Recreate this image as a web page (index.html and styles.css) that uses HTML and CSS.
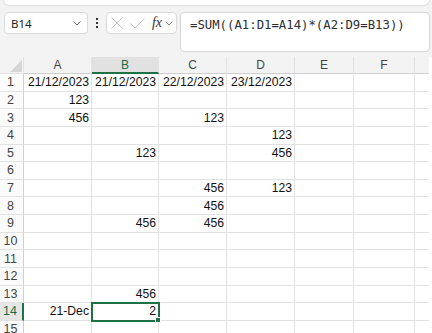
FILE: index.html
```html
<!DOCTYPE html>
<html lang="en">
<head>
  <meta charset="UTF-8" />
  <title>Sheet</title>
  <link rel="stylesheet" href="styles.css">
</head>
<body>

  <div class="top">
    <div class="ribbon-edge"></div>
    <div class="formula-bar">
      <div class="name-box">
        <span>B14</span>
        <svg width="8" height="5" viewBox="0 0 8 5"><path d="M0.5 0.5 L4 4 L7.5 0.5" fill="none" stroke="#666" stroke-width="1"/></svg>
      </div>
      <div class="dots"><i></i><i></i><i></i></div>
      <div class="fx-box">
        <svg class="icon-x" width="12" height="12" viewBox="0 0 12 12"><path d="M0.5 0.5 L11.5 11.5 M11.5 0.5 L0.5 11.5" fill="none" stroke="#c4c4c4" stroke-width="1"/></svg>
        <svg class="icon-ok" width="15" height="11" viewBox="0 0 15 11"><path d="M0.5 5.5 L5 10 L14.5 0.5" fill="none" stroke="#c4c4c4" stroke-width="1"/></svg>
        <span class="fx">fx</span>
        <svg width="8" height="5" viewBox="0 0 8 5"><path d="M0.5 0.5 L4 4 L7.5 0.5" fill="none" stroke="#888" stroke-width="1"/></svg>
      </div>
      <div class="formula-input">=SUM((A1:D1=A14)*(A2:D9=B13))</div>
    </div>
  </div>

  <div class="sheet-wrap">
    <div class="sheet" id="sheet">
      <!-- cells are inserted by JS -->
    </div>
  </div>

  <script>
    // last column is only partly in view, its letter falls outside
    const cols = ["A", "B", "C", "D", "E", "F", ""];
    const data = {
      1: { A: "21/12/2023", B: "21/12/2023", C: "22/12/2023", D: "23/12/2023" },
      2: { A: "123" },
      3: { A: "456", C: "123" },
      4: { D: "123" },
      5: { B: "123", D: "456" },
      7: { C: "456", D: "123" },
      8: { C: "456" },
      9: { B: "456", C: "456" },
      13: { B: "456" },
      14: { A: "21-Dec", B: "2" }
    };
    const activeCol = "B";
    const activeRow = 14;

    const sheet = document.getElementById("sheet");

    function addCell(cls, text) {
      const cell = document.createElement("div");
      cell.className = cls;
      cell.textContent = text || "";
      sheet.appendChild(cell);
      return cell;
    }

    // Header row
    const corner = addCell("corner");
    corner.innerHTML = '<svg width="14" height="14" viewBox="0 0 14 14"><path d="M13 1 L13 13 L1 13 Z" fill="#d6d6d6"/></svg>';
    cols.forEach(c => {
      addCell("col-head" + (c === activeCol ? " active" : ""), c);
    });

    // Rows
    for (let r = 1; r <= 15; r++) {
      addCell("row-head" + (r === activeRow ? " active" : ""), r);
      cols.forEach(c => {
        const value = data[r] && data[r][c];
        const cls = "cell" + (r === activeRow && c === activeCol ? " selected" : "");
        addCell(cls, value);
      });
    }
  </script>

</body>
</html>
```
FILE: styles.css
```css
body {
  margin: 0;
  width: 432px;
  height: 333px;
  overflow: hidden;
  background-color: #fff;
  font-family: "Liberation Sans", Arial, sans-serif;
}

.top {
  background-color: #f3f3f3;
  padding-bottom: 5px;
}

.ribbon-edge {
  height: 5px;
  margin: 0 2px 0 3px;
  background-color: #fff;
  border: 1px solid #e0e0e0;
  border-top: none;
  border-radius: 0 0 6px 6px;
}

.formula-bar {
  display: flex;
  align-items: flex-start;
  padding: 6px 2px 0 4px;
}

.name-box {
  box-sizing: border-box;
  width: 84px;
  height: 22px;
  display: flex;
  align-items: center;
  justify-content: space-between;
  padding: 0 6px 0 6px;
  background-color: #fff;
  border: 1px solid #dadada;
  border-radius: 4px;
  font-family: "Noto Sans", sans-serif;
  font-size: 11.5px;
  color: #222;
}

.dots {
  width: 18px;
  height: 22px;
  display: flex;
  flex-direction: column;
  align-items: center;
  justify-content: center;
  gap: 2px;
}

.dots i {
  width: 2px;
  height: 2px;
  background-color: #333;
}

.fx-box {
  box-sizing: border-box;
  width: 71px;
  height: 22px;
  margin-right: 3px;
  display: flex;
  align-items: center;
  padding: 0 3px 0 4px;
  background-color: #fff;
  border: 1px solid #dadada;
  border-radius: 4px;
}

.icon-x {
  margin-right: 7px;
}

.icon-ok {
  margin-right: 7px;
}

.fx {
  font-family: "Liberation Serif", serif;
  font-style: italic;
  font-size: 14px;
  color: #333;
  margin-right: 3px;
}

.formula-input {
  flex: 1;
  box-sizing: border-box;
  height: 40px;
  padding: 4px 9px;
  background-color: #fff;
  border: 1px solid #d6d6d6;
  border-radius: 4px;
  font-family: "DejaVu Sans Mono", monospace;
  font-size: 12.3px;
  line-height: 16px;
  color: #2c2f36;
}

.sheet-wrap {
  width: 429px;
  overflow: hidden;
}

.sheet {
  display: grid;
  grid-template-columns: 24px 68px 67px 68px 68px 59px 61px 68px;
  grid-template-rows: 17px repeat(15, 17.64px);
  width: max-content;
  font-size: 12.2px;
  color: #111;
}

.sheet > div {
  box-sizing: border-box;
  border-right: 1px solid #e2e2e2;
  border-bottom: 1px solid #e2e2e2;
  white-space: nowrap;
  overflow: hidden;
  display: flex;
  align-items: center;
}

.corner {
  background-color: #f3f3f3;
  justify-content: flex-end;
  align-items: flex-end !important;
}

.col-head {
  background-color: #f3f3f3;
  justify-content: center;
  color: #444;
  font-size: 12px;
  border-bottom-color: #cfcfcf !important;
}

.col-head.active {
  background-color: #e1e1e1;
  color: #1e6b41;
  border-bottom: 2px solid #1e7145 !important;
}

.row-head {
  background-color: #fbfbfb;
  justify-content: center;
  padding-right: 2px;
  color: #444;
  font-size: 12.5px;
  border-right-color: #d0d0d0 !important;
}

.row-head.active {
  background-color: #e6e6e6;
  color: #1e6b41;
  border-right: 2px solid #1e7145 !important;
}

.cell {
  justify-content: flex-end;
  padding-right: 2px;
}

.sheet > .selected {
  position: relative;
  overflow: visible;
  z-index: 1;
  outline: 2px solid #1e7145;
  outline-offset: -1px;
}

.selected::after {
  content: "";
  position: absolute;
  right: -3px;
  bottom: -3px;
  width: 4px;
  height: 4px;
  background-color: #1e7145;
  border: 1px solid #fff;
}
```
